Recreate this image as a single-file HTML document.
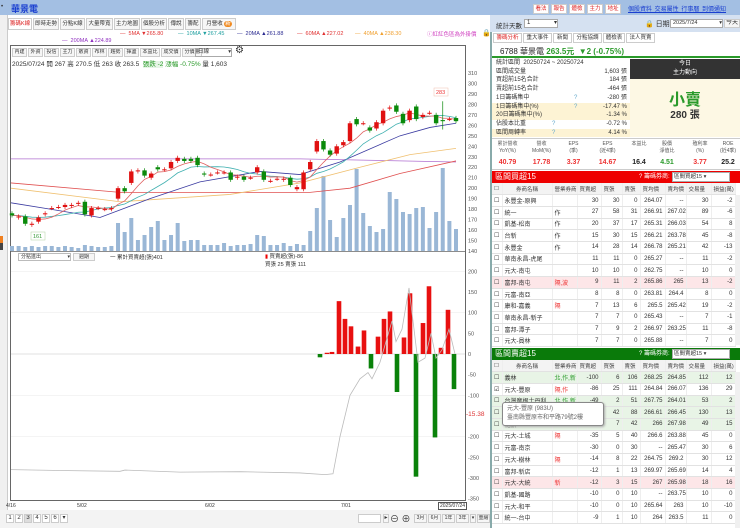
<!DOCTYPE html>
<html><head><meta charset="utf-8">
<style>
*{box-sizing:border-box;margin:0;padding:0}
body{width:740px;height:528px;overflow:hidden;background:#fff;font-family:"Liberation Sans","Noto Sans CJK TC",sans-serif;font-size:7px;color:#333;position:relative}
.a{position:absolute;white-space:nowrap}
.btn{position:absolute;border:1px solid #ccc;background:#f6f6f6;font-size:6px;line-height:9px;text-align:center;white-space:nowrap;overflow:hidden}
table{border-collapse:collapse;font-size:6px;table-layout:fixed}
td{height:11.7px;border-bottom:1px solid #e2e2e2;border-right:1px solid #eee;padding:0 2px;white-space:nowrap;overflow:hidden}
.r{text-align:right}
</style></head><body>
<div class="a" style="left:0;top:0;width:490px;height:15px;background:#a3bfe3"></div>
<div class="a" style="left:1px;top:4px;font-size:6px">•</div>
<div class="a" style="left:11px;top:2px;color:#1a3fd0;font-size:9px;font-weight:bold">華景電</div>
<div class="a" style="left:0;top:15px;width:8px;height:513px;background:#f0f0f0;border-right:1px solid #ccc"></div>
<div class="a" style="left:0;top:236px;width:3px;height:7px;background:#f08020"></div>
<div class="a" style="left:0;top:243px;width:3px;height:7px;background:#444"></div>
<div id="tabs"></div>
<div class="a" style="left:120px;top:31px;color:#e03030;font-size:5.5px">—&nbsp; 5MA ▼265.80</div>
<div class="a" style="left:178px;top:31px;color:#20a0a0;font-size:5.5px">—&nbsp; 10MA ▼267.45</div>
<div class="a" style="left:237px;top:31px;color:#2a2a90;font-size:5.5px">—&nbsp; 20MA ▲261.88</div>
<div class="a" style="left:297px;top:31px;color:#e03030;font-size:5.5px">—&nbsp; 60MA ▲227.02</div>
<div class="a" style="left:355px;top:31px;color:#f0a030;font-size:5.5px">—&nbsp; 40MA ▲238.30</div>
<div class="a" style="left:427px;top:30px;color:#d040c0;font-size:5.5px">ⓘ紅紅色區為外掛價</div>
<div class="a" style="left:482px;top:29px;font-size:7px">🔒</div>
<div class="a" style="left:62px;top:38px;color:#9030c0;font-size:5.5px">—&nbsp; 200MA ▲224.89</div>
<div class="a" style="left:10px;top:45px;width:456px;height:456px;border:1px solid #666"></div>
<div id="tb"></div>
<div class="a" style="left:195px;top:48px;width:37px;height:9px;border:1px solid #aaa;font-size:5.5px;padding-left:2px;line-height:7px">日線<span style="float:right">▾</span></div>
<div class="a" style="left:235px;top:46px;font-size:10px;line-height:10px">⚙</div>
<div class="a" style="left:12px;top:58px;font-size:6.5px">2025/07/24 開 267 高 270.5 低 263 收 263.5 &nbsp;<span style="color:#2a9a2a;background:#e6f5e6">張跌 -2</span> <span style="color:#2a9a2a">漲幅 -0.75%</span> 量 1,603</div>
<svg class="a" style="left:0;top:0" width="490" height="528" id="ch"></svg>
<div class="a" style="left:18px;top:253px;width:53px;height:8px;border:1px solid #bbb;font-size:5px;line-height:6px;padding-left:2px">分點進出<span style="float:right">▾</span></div>
<div class="btn" style="left:73px;top:253px;width:22px;height:8px;line-height:6px;font-size:5px">週期</div>
<div class="a" style="left:110px;top:253px;font-size:5.5px">一 累計買賣超(張)401</div>
<div class="a" style="left:265px;top:253px;font-size:5.5px;line-height:8px"><span style="color:#e00">▮</span> 買賣超(張)-86<br>買張 25 賣張 111</div>
<div class="a" style="left:6px;top:503px;font-size:5px;line-height:7px">4/16<br>2025</div>
<div class="a" style="left:77px;top:503px;font-size:5px">5/02</div>
<div class="a" style="left:205px;top:503px;font-size:5px">6/02</div>
<div class="a" style="left:341px;top:503px;font-size:5px">7/01</div>
<div class="a" style="left:438px;top:502px;font-size:5px;border:1px solid #555;padding:0 1px;background:#fff">2025/07/24</div>
<div class="a" style="left:0;top:510px;width:490px;height:18px;background:#f3f3f3"></div>
<div id="pg"></div>
<div class="a" style="left:490px;top:0;width:250px;height:528px;background:#fff;border-left:2px solid #8aa"></div>
<div class="a" style="left:490px;top:0;width:250px;height:15px;background:#a3bfe3"></div>
<div id="rb"></div>
<div class="a" style="left:628px;top:4px;font-size:6px;color:#1a3fd0;text-decoration:underline;word-spacing:1px">個股資料 交易屬性 行事曆 到價通知</div>
<div class="a" style="left:490px;top:15px;width:250px;height:17px;background:#d5e1f1"></div>
<div class="a" style="left:496px;top:20px;font-size:6.5px">統計天數</div>
<div class="a" style="left:524px;top:19px;width:34px;height:9px;background:#fff;border:1px solid #aaa;font-size:6px;padding-left:2px;line-height:7px">1<span style="float:right">▾</span></div>
<div class="a" style="left:645px;top:19px;font-size:7px">🔒 日期</div>
<div class="a" style="left:670px;top:19px;width:53px;height:9px;background:#fff;border:1px solid #aaa;font-size:5.5px;padding-left:2px;line-height:7px">2025/7/24 <span style="float:right">▾</span></div>
<div class="btn" style="left:724px;top:19px;width:16px;height:9px;line-height:7px">今天</div>
<div id="rt"></div>
<div class="a" style="left:492px;top:44px;width:248px;height:14px;border-bottom:2px solid #2a9a2a"></div>
<div class="a" style="left:500px;top:46px;font-size:8px;color:#222">6788 華景電 <span style="color:#2a9a2a;font-weight:bold">263.5元 &nbsp;▼2 (-0.75%)</span></div>
<div id="st"></div>
<div class="a" style="left:630px;top:59px;width:110px;height:20px;background:#333;color:#fff;font-size:6px;text-align:center;line-height:9px;padding-top:1px">今日<br>主力動向</div>
<div class="a" style="left:630px;top:79px;width:110px;height:58px;background:#fdf8e4"></div>
<div class="a" style="left:630px;top:86px;width:110px;text-align:center;font-size:16px;font-weight:bold;color:#2a9a2a">小賣</div>
<div class="a" style="left:630px;top:106px;width:110px;text-align:center;font-size:10px;font-weight:bold;color:#333">280 張</div>
<div id="fin"></div>
<div class="a" style="left:492px;top:171px;width:248px;height:12px;background:#e00;color:#fff;font-size:8px;padding-left:3px;line-height:12px">區間買超15<span style="position:absolute;left:147px;font-size:6px">? 籌碼券商:</span></div>
<div class="a" style="left:672px;top:172px;width:58px;height:10px;background:#fff;border:1px solid #aaa;font-size:5.5px;line-height:8px;padding-left:1px">區間買超15 ▾</div>
<table class="a" style="left:492px;top:183px;width:243px" id="bt"></table>
<div class="a" style="left:492px;top:348px;width:248px;height:12px;background:#0a7a0a;color:#fff;font-size:8px;padding-left:3px;line-height:12px">區間賣超15<span style="position:absolute;left:147px;font-size:6px">? 籌碼券商:</span></div>
<div class="a" style="left:672px;top:349px;width:58px;height:10px;background:#fff;border:1px solid #aaa;font-size:5.5px;line-height:8px;padding-left:1px">區間賣超15 ▾</div>
<table class="a" style="left:492px;top:360px;width:243px" id="st2"></table>
<div class="a" style="left:735px;top:195px;width:5px;height:150px;background:#f0f0f0"></div>
<div class="a" style="left:735px;top:372px;width:5px;height:156px;background:#f0f0f0"></div>
<div class="a" style="left:502px;top:402px;width:102px;height:24px;background:#fff;border:1px solid #888;border-radius:3px;font-size:6px;color:#666;padding:2px 4px;line-height:9px;box-shadow:1px 1px 2px #aaa">元大-豐原 (983U)<br>臺南縣豐原市和平路79號2樓</div>
<script>
const $=id=>document.getElementById(id);
let h='';
[["籌碼K線",8,24,1],["即時走勢",33,26],["分點K線",60,25],["大量帶寬",86,27],["主力地圖",114,26],["個股分析",141,26],["傳說",168,16],["籌配",185,16],["月營收",202,34]].forEach(t=>{h+=`<div class="btn" style="left:${t[1]}px;top:18px;width:${t[2]}px;height:12px;line-height:10px;font-size:5.5px;background:${t[3]?'#fff':'#f6f6f6'};color:${t[3]?'#d22':'#333'}">${t[0]}${t[0]=='月營收'?' <span style="background:#f08a20;color:#fff;border-radius:4px;padding:0 1px">新</span>':''}</div>`});
$('tabs').innerHTML=h;h='';
let x=12;["內建","外資","投信","主力","散資","布林","趨勢","揮盪","本益比","成交價","分價量"].forEach(t=>{let w=t.length*5+5;h+=`<div class="btn" style="left:${x}px;top:48px;width:${w}px;height:9px;line-height:7px;font-size:5px">${t}</div>`;x+=w+1});
$('tb').innerHTML=h;h='';
x=6;["1","2","3","4","5","6","▾"].forEach((t,i)=>{h+=`<div class="btn" style="left:${x}px;top:514px;width:8px;height:9px;line-height:7px;background:${i==2?'#ddd':'#fff'}">${t}</div>`;x+=9});
h+=`<div class="a" style="left:358px;top:514px;width:23px;height:9px;border:1px solid #ccc;background:#fff"></div><div class="btn" style="left:383px;top:514px;width:6px;height:9px;line-height:7px">▸</div><div class="a" style="left:390px;top:512px;font-size:9px">⊖ ⊕</div>`;
x=414;["3月","6月","1年","3年","▾","重繪"].forEach(t=>{let w=t.length>1?13:6;h+=`<div class="btn" style="left:${x}px;top:514px;width:${w}px;height:9px;line-height:7px;font-size:5px">${t}</div>`;x+=w+1});
$('pg').innerHTML=h;h='';
x=533;["看法","報告","體檢","主力","地址"].forEach(t=>{h+=`<div class="btn" style="left:${x}px;top:4px;width:16px;height:10px;line-height:8px;background:#fff;color:#d22;font-size:5.5px">${t}</div>`;x+=18});
$('rb').innerHTML=h;h='';
x=493;[["籌碼分析",29,1],["重大事件",29],["新聞",19],["分點協調",29],["體檢表",22],["法人買賣",29]].forEach(t=>{h+=`<div class="btn" style="left:${x}px;top:33px;width:${t[1]}px;height:10px;line-height:8px;font-size:5.5px;background:#fff;color:${t[2]?'#d22':'#333'}">${t[0]}</div>`;x+=t[1]+1});
$('rt').innerHTML=h;h='';
[["統計區間 &nbsp;20250724 ~ 20250724","",0],["區間成交量","1,603 張",0],["買超前15名合計","184 張",0],["賣超前15名合計","-464 張",0],["1日籌碼集中","-280 張",0,1],["1日籌碼集中(%)","-17.47 %",1,1],["20日籌碼集中(%)","-1.34 %",1],["佔股本比重","-0.72 %",0,1],["區間周轉率","4.14 %",1,1]].forEach((r,i)=>{let y=59+i*8.7;h+=`<div class="a" style="left:492px;top:${y}px;width:138px;height:8.7px;background:${r[2]?'#fdf3d4':'#fff'};font-size:6px;line-height:8.7px;padding-left:4px">${r[0]}${r[3]?`<span style="position:absolute;left:${i>6?60:82}px;color:#6ac">?</span>`:''}<span style="position:absolute;right:3px">${r[1]}</span></div>`});
$('st').innerHTML=h;h='';
[["累計營收<br>YoY(%)","40.79","#e33"],["營收<br>MoM(%)","17.78","#e33"],["EPS<br>(季)","3.37","#e33"],["EPS<br>(近4季)","14.67","#e33"],["本益比","16.4","#222"],["股價<br>淨值比","4.51","#2a9a2a"],["殖利率<br>(%)","3.77","#e33"],["ROE<br>(近4季)","25.2","#222"]].forEach((c,i)=>{let xs=[492,523,560,587,628,650,684,716][i];let w=[31,37,27,41,22,34,32,24][i];h+=`<div class="a" style="left:${xs}px;top:141px;width:${w}px;text-align:center;font-size:5px;line-height:7px;color:#555">${c[0]}</div><div class="a" style="left:${xs}px;top:159px;width:${w}px;text-align:center;font-size:7px;font-weight:bold;color:${c[2]}">${c[1]}</div>`});
h+=`<div class="a" style="left:492px;top:138px;width:248px;height:32px;border-top:1px solid #ccc;border-bottom:1px solid #ccc"></div>`;
$('fin').innerHTML=h;
const head=`<tr style="background:#f3f3f3;color:#444;font-size:5.5px"><td>☐</td><td style="text-align:center">券商名稱</td><td>營業券商</td><td>買賣超</td><td>買張</td><td>賣張</td><td>買均價</td><td>賣均價</td><td>交易量</td><td>損益(萬)</td></tr>`;
const W=[10,50,25,24,21,18,25,21,25,24];
function tb(rows){let out=head;rows.forEach(r=>{out+=`<tr style="background:${r[9]||'#fff'}"><td>${r[10]?'☑':'☐'}</td><td>${r[0]}</td><td style="color:${r[11]||'#333'}">${r[1]}</td>`+r.slice(2,9).map(v=>`<td class="r">${v}</td>`).join('')+'</tr>'});return out}
const P='#fde6e8',G='#e8f4e6';
$('bt').innerHTML=tb([["永豐金-原興","",30,30,0,"264.07","--",30,-2],["統一","作",27,58,31,"266.91","267.02",89,-6],["凱基-松南","作",20,37,17,"265.31","266.03",54,8],["台新","作",15,30,15,"266.21","263.78",45,-8],["永豐金","作",14,28,14,"266.78","265.21",42,-13],["華南永昌-虎尾","",11,11,0,"265.27","--",11,-2],["元大-南屯","",10,10,0,"262.75","--",10,0],["富邦-南屯","隔,波",9,11,2,"265.86","265",13,-2,P,0,"#e33"],["元富-南亞","",8,8,0,"263.81","264.4",8,0],["康和-嘉義","隔",7,13,6,"265.5","265.42",19,-2,0,0,"#e33"],["華南永昌-新子","",7,7,0,"265.43","--",7,-1],["富邦-潭子","",7,9,2,"266.97","263.25",11,-8],["元大-員林","",7,7,0,"265.88","--",7,0]]);
$('st2').innerHTML=tb([["義林","北,作,新",-100,6,106,"268.25","264.85",112,12,G,0,"#2a9a2a"],["元大-豐原","隔,作",-86,25,111,"264.84","266.07",136,29,0,1,"#e33"],["台灣摩根士丹利","北,作,新",-49,2,51,"267.75","264.01",53,2,G,0,"#2a9a2a"],["美林","",-46,42,88,"266.61","266.45",130,13,G],["花旗","",-35,7,42,"266","267.98",49,15,G],["元大-土城","隔",-35,5,40,"266.6","263.88",45,0,0,0,"#e33"],["元富-南京","",-30,0,30,"--","265.47",30,6],["元大-樹林","隔",-14,8,22,"264.75","269.2",30,12,0,0,"#e33"],["富邦-新店","",-12,1,13,"269.97","265.69",14,4],["元大-大統","新",-12,3,15,"267","265.98",18,16,P,0,"#e33"],["凱基-國路","",-10,0,10,"--","263.75",10,0],["元大-和平","",-10,0,10,"265.64","263",10,-10],["統一-台中","",-9,1,10,"264","263.5",11,0]]);
document.querySelectorAll('table').forEach(t=>{t.querySelectorAll('tr').forEach(r=>{[...r.children].forEach((c,i)=>c.style.width=W[i]+'px')})});
const Y=v=>73+(310-v)*1.047, L=v=>354-v*0.413;
const C=[[176,174],[172,173],[173,166],[165,166],[168,172],[175,176],[181,181],[182,182],[182,184],[183,184],[185,186],[187,175],[174,181],[181,181],[180,180],[180,181],[190,200],[200,197],[205,216],[216,217],[217,212],[210,214],[220,218],[218,218],[219,225],[226,229],[228,226],[228,226],[229,222],[214,213],[213,213],[215,215],[215,215],[215,208],[210,211],[211,208],[210,210],[215,220],[216,208],[207,207],[209,209],[208,209],[210,203],[199,201],[199,215],[218,225],[235,245],[245,237],[236,232],[233,240],[241,244],[245,262],[266,261],[262,262],[258,255],[257,263],[262,274],[276,277],[279,273],[271,262],[265,274],[278,266],[268,270],[272,272],[270,262],[265,264],[266,266],[267,264]];
const n=C.length,X=i=>12+i*(444/(n-1));
const V=[5,5,4,5,4,5,5,4,5,4,3,6,5,4,4,5,28,19,33,11,16,24,30,11,16,28,10,11,11,6,6,6,8,5,6,6,7,16,15,6,6,8,5,7,6,20,43,75,31,14,33,46,82,38,25,19,22,59,52,39,37,43,44,23,39,83,30,22];
let s='';
for(let v=140;v<=310;v+=10){s+=`<text x="468" y="${Y(v)+2}" font-size="5.5" fill="#555">${v}</text>`}
[200,100,0,-100,-200].forEach(v=>s+=`<line x1="11" x2="465" y1="${L(v)}" y2="${L(v)}" stroke="#eee" stroke-width=".6"/>`);
[[200,'200'],[150,'150'],[100,'100'],[50,'50'],[0,'0'],[-50,'-50'],[-100,'-100'],[-200,'-200'],[-250,'-250'],[-300,'-300'],[-350,'-350']].forEach(a=>s+=`<text x="468" y="${L(a[0])+2}" font-size="5.5" fill="#555">${a[1]}</text>`);
s+=`<text x="466" y="416" font-size="6.5" fill="#d33">-15.38</text>`;
s+=`<line x1="11" x2="465" y1="251.5" y2="251.5" stroke="#666" stroke-width=".8"/><line x1="11" x2="465" y1="${L(0)}" y2="${L(0)}" stroke="#ccc" stroke-width=".6"/>`;
for(let i=0;i<n;i++){let v=V[i]||6;s+=`<rect x="${X(i)-2}" y="${251-v}" width="4" height="${v}" fill="#9ab7d6"/>`}
function line(pts,c){s+=`<polyline fill="none" stroke="${c}" stroke-width=".8" points="${pts.map(p=>p[0]+','+Y(p[1])).join(' ')}"/>`}
line([[11,228],[150,228],[300,228],[456,225]],'#b070d0');
line([[11,205],[120,196],[310,196],[350,200],[400,214],[456,226]],'#e05050');
line([[11,200],[120,187],[230,194],[300,205],[360,220],[410,232],[456,238]],'#f0c070');
line([[11,186],[50,180],[100,172],[150,190],[200,206],[260,216],[300,213],[340,225],[400,250],[430,258],[456,262]],'#3a3aa0');
function ma(k){let p=[];for(let i=0;i<n;i++){let t=0;for(let j=0;j<k;j++)t+=C[Math.max(0,i-j)][1];p.push([X(i),t/k])}return p}
line(ma(10),'#40b0b0');line(ma(5),'#e06060');
for(let i=0;i<n;i++){let [o,c]=C[i],up=c>=o,col=up?'#e01010':'#0a8a0a',hi=Math.max(o,c)+2,lo=Math.min(o,c)-2;if(i==65){hi=283;lo=256}
s+=`<line x1="${X(i)}" x2="${X(i)}" y1="${Y(hi)}" y2="${Y(lo)}" stroke="${col}" stroke-width=".7"/><rect x="${X(i)-2.2}" y="${Y(Math.max(o,c))}" width="4.4" height="${Math.max(1,Math.abs(o-c)*1.047)}" fill="${col}"/>`}
s+=`<rect x="434" y="88" width="14" height="8" fill="#fff" stroke="#f0c0b0" stroke-width=".5"/><text x="436" y="94" font-size="5.5" fill="#e33">283</text>`;
s+=`<rect x="31" y="232" width="14" height="8" fill="#fff" stroke="#b0d0a0" stroke-width=".5"/><text x="33" y="238" font-size="5.5" fill="#393">161</text>`;
[[320,-8],[327,3],[332,5],[339,128],[345,85],[351,67],[358,18],[364,57],[371,-35],[378,42],[384,85],[390,103],[397,-92],[404,40],[410,147],[416,-297],[423,75],[429,164],[435,-202],[441,15],[448,107],[454,-85]].forEach(b=>{let y0=L(0),y1=L(b[1]);s+=`<rect x="${b[0]-2.3}" y="${Math.min(y0,y1)}" width="4.6" height="${Math.abs(y1-y0)}" fill="${b[1]>0?'#e81010':'#0a820a'}"/>`});
let g=[[11,-280],[60,-282],[120,-284],[125,-281],[180,-286],[240,-285],[300,-288],[325,-292],[333,-290],[340,-200],[350,-100],[360,-60],[368,-45],[372,-60],[380,-20],[386,30],[392,80],[396,30],[402,60],[409,160],[414,60],[418,-20],[425,-10],[431,50],[436,-10],[442,10],[449,60],[455,0]];
s+=`<polyline fill="none" stroke="#bbb" stroke-width=".8" points="${g.map(p=>p[0]+','+L(p[1])).join(' ')}"/>`;
$('ch').innerHTML=s;
</script>
</body></html>
